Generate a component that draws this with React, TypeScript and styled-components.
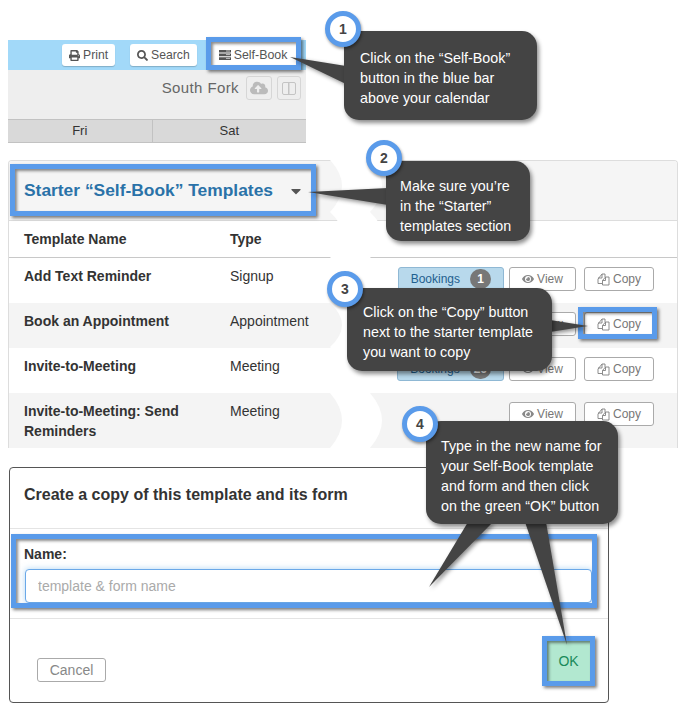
import React from 'react';
import styled, { createGlobalStyle } from 'styled-components';
import { FaPrint, FaSearch, FaEye, FaCloudUploadAlt, FaCaretDown } from 'react-icons/fa';

const GlobalStyle = createGlobalStyle`
    html, body {
        margin: 0;
        padding: 0;
        background: #ffffff;
    }
    body {
        font-family: 'Liberation Sans', Arial, sans-serif;
        font-size: 14px;
        color: #333333;
    }
`;

const rows = [
    { name: 'Add Text Reminder', type: 'Signup', bookings: 1 },
    { name: 'Book an Appointment', type: 'Appointment' },
    { name: 'Invite-to-Meeting', type: 'Meeting', bookings: 26 },
    { name: 'Invite-to-Meeting: Send Reminders', type: 'Meeting', tall: true },
];

const highlights = [
    { x: 206, y: 37, w: 95, h: 33 },
    { x: 10, y: 164, w: 306, h: 52 },
    { x: 578, y: 307, w: 79, h: 32 },
    { x: 11, y: 534, w: 586, h: 74 },
    { x: 542, y: 636, w: 53, h: 50 },
];

const callouts = [
    { n: 1, x: 344, y: 31, w: 193, h: 89, px: 16, py: 17, cx: 343, cy: 29, lines: ['Click on the “Self-Book”', 'button in the blue bar', 'above your calendar'] },
    { n: 2, x: 386, y: 161, w: 144, h: 80, px: 14, py: 15, cx: 384, cy: 158, lines: ['Make sure you’re', 'in the “Starter”', 'templates section'] },
    { n: 3, x: 347, y: 288, w: 205, h: 83, px: 16, py: 14, cx: 345, cy: 289, lines: ['Click on the “Copy” button', 'next to the starter template', 'you want to copy'] },
    { n: 4, x: 426, y: 421, w: 192, h: 103, px: 15, py: 15, cx: 420, cy: 424, lines: ['Type in the new name for', 'your Self-Book template', 'and form and then click', 'on the green “OK” button'] },
];

const tails = [
    '290,57 346,66 346,84',
    '308,192 388,188 388,205',
    '588,326 550,320 550,332',
    '429,587 468,522 493,522',
    '567,645 525,522 546,522',
];

// white torn strip through the panel, cusps sit on the row boundaries
const tearEdge = [160, 212, 257, 303, 347, 393, 448];

const tearPath = () => {
    const left = tearEdge.slice(1).map((y, i) => `Q354 ${(y + tearEdge[i]) / 2} 330 ${y}`);
    const right = tearEdge
        .slice(0, -1)
        .reverse()
        .map((y, i) => `Q394 ${(y + tearEdge[tearEdge.length - 1 - i]) / 2} 370 ${y}`);
    return `M330 ${tearEdge[0]} ${left.join(' ')} L370 448 ${right.join(' ')} Z`;
};

const CopyIcon = () => (
    <svg width="13" height="13" viewBox="0 0 13 13" fill="none" stroke="#808080" strokeWidth="0.9">
        <path d="M5 10.5H1V6l4-5h3v3" />
        <path d="M5 1v4H1" />
        <path d="M5.5 7.5 8.5 4H12v8H5.5z" />
        <path d="M8.5 4v3.5h-3" />
    </svg>
);

const App = () => {
    return (
        <Page>
            <GlobalStyle />
            <Calendar>
                <BlueBar>
                    <BarButton>
                        <FaPrint size={11} /> Print
                    </BarButton>
                    <BarButton>
                        <FaSearch size={11} /> Search
                    </BarButton>
                    <SelfBookButton>
                        <SelfBookIcon viewBox="0 0 12 10">
                            <path d="M0 0h12v2.6H0zM0 3.6h12v2.6H0zM0 7.2h12V10H0z" fill="#555" />
                            <path d="M7 1h4M7 4.6h4M7 8.4h4" stroke="#ddd" strokeWidth="0.8" />
                        </SelfBookIcon>
                        Self-Book
                    </SelfBookButton>
                </BlueBar>
                <LocationBar>
                    <LocationName>South Fork</LocationName>
                    <IconBox $width={26}>
                        <FaCloudUploadAlt size={18} />
                    </IconBox>
                    <IconBox $width={24}>
                        <SplitIcon />
                    </IconBox>
                </LocationBar>
                <DaysRow>
                    <DayCell $width={144}>Fri</DayCell>
                    <DayCell $width={154}>Sat</DayCell>
                </DaysRow>
            </Calendar>

            <Panel>
                <PanelHeader>
                    <PanelTitle>Starter “Self-Book” Templates</PanelTitle>
                    <FaCaretDown size={16} color="#555" />
                </PanelHeader>
                <TableHead>
                    <span>Template Name</span>
                    <span>Type</span>
                </TableHead>
                {rows.map((row, i) => (
                    <TableRow key={row.name} $shaded={i % 2 === 1} $tall={row.tall}>
                        <RowName>{row.name}</RowName>
                        <span>{row.type}</span>
                        <RowActions>
                            {row.bookings && (
                                <BookingsButton>
                                    Bookings <Badge>{row.bookings}</Badge>
                                </BookingsButton>
                            )}
                            <RowButton $width={67}>
                                <FaEye size={12} color="#888" /> View
                            </RowButton>
                            <RowButton $width={70}>
                                <CopyIcon /> Copy
                            </RowButton>
                        </RowActions>
                    </TableRow>
                ))}
            </Panel>

            <Modal>
                <ModalHeader>Create a copy of this template and its form</ModalHeader>
                <ModalBody>
                    <NameLabel>Name:</NameLabel>
                    <NameInput placeholder="template & form name" readOnly />
                </ModalBody>
                <ModalFooter>
                    <CancelButton>Cancel</CancelButton>
                    <OkButton>OK</OkButton>
                </ModalFooter>
            </Modal>

            <Overlay viewBox="0 0 686 718">
                <path d={tearPath()} fill="#ffffff" />
            </Overlay>

            {highlights.map((h) => (
                <Highlight key={`${h.x}-${h.y}`} $x={h.x} $y={h.y} $w={h.w} $h={h.h} />
            ))}

            <TailSvg viewBox="0 0 686 718">
                {tails.map((points) => (
                    <polygon key={points} points={points} fill="#444444" />
                ))}
            </TailSvg>

            {callouts.map((c) => (
                <React.Fragment key={c.n}>
                    <Callout $x={c.x} $y={c.y} $w={c.w} $h={c.h} $px={c.px} $py={c.py}>
                        {c.lines.map((line) => (
                            <div key={line}>{line}</div>
                        ))}
                    </Callout>
                    <StepCircle $cx={c.cx} $cy={c.cy}>
                        {c.n}
                    </StepCircle>
                </React.Fragment>
            ))}
        </Page>
    );
};

export default App;

const Page = styled.div`
    position: relative;
    width: 686px;
    height: 718px;
    overflow: hidden;
    padding: 40px 0 0 8px;
    box-sizing: border-box;
`;

const Calendar = styled.div`
    width: 298px;
`;

const BlueBar = styled.div`
    height: 30px;
    background: #a2d9f9;
    display: flex;
    align-items: flex-start;
    padding: 4px 0 0 54px;
    box-sizing: border-box;
    gap: 15px;
`;

const BarButton = styled.div`
    height: 22px;
    padding: 0 7px;
    display: flex;
    align-items: center;
    gap: 3px;
    background: #ffffff;
    border-radius: 3px;
    box-shadow: 0 1px 1px rgba(0, 0, 0, 0.2);
    font-size: 12.2px;
    color: #555555;
`;

const SelfBookButton = styled(BarButton)`
    width: 90px;
    height: 26px;
    box-sizing: border-box;
    margin: -2px 0 0 -3px;
    padding: 0 0 0 10px;
    box-shadow: none;
    border-radius: 0;
    font-size: 12.4px;
`;

const SelfBookIcon = styled.svg`
    width: 12px;
    height: 10px;
`;

const LocationBar = styled.div`
    height: 49px;
    background: #eeeeee;
    display: flex;
    justify-content: flex-end;
    align-items: flex-start;
    padding: 6px 5px 0 0;
    box-sizing: border-box;
    gap: 5px;
`;

const LocationName = styled.div`
    font-size: 15px;
    letter-spacing: 0.4px;
    line-height: 24px;
    color: #666666;
    margin-right: 2px;
`;

const IconBox = styled.div<{ $width: number }>`
    width: ${(p) => p.$width}px;
    height: 24px;
    box-sizing: border-box;
    border: 1px solid #d6d6d6;
    border-radius: 3px;
    color: #bbbbbb;
    display: flex;
    align-items: center;
    justify-content: center;
`;

const SplitIcon = styled.div`
    width: 14px;
    height: 13px;
    border: 1.5px solid #c4c4c4;
    border-radius: 2px;
    box-sizing: border-box;
    background: linear-gradient(#c4c4c4, #c4c4c4) center / 1.5px 100% no-repeat;
`;

const DaysRow = styled.div`
    display: flex;
    height: 24px;
    background: #d9d9d9;
    border-top: 1px solid #c2c2c2;
    border-bottom: 1px solid #c2c2c2;
    box-sizing: border-box;
`;

const DayCell = styled.div<{ $width: number }>`
    width: ${(p) => p.$width}px;
    text-align: center;
    font-size: 13px;
    line-height: 22px;
    color: #333333;
    & + & {
        border-left: 1px solid #c2c2c2;
    }
`;

const Panel = styled.div`
    width: 670px;
    height: 288px;
    margin-top: 17px;
    box-sizing: border-box;
    border: 1px solid #dddddd;
    border-bottom: none;
    border-radius: 4px 4px 0 0;
    overflow: hidden;
`;

const PanelHeader = styled.div`
    height: 59px;
    background: #f5f5f5;
    border-bottom: 1px solid #dddddd;
    display: flex;
    align-items: center;
    padding: 0 0 0 15px;
    gap: 15px;
`;

const PanelTitle = styled.div`
    font-size: 17.4px;
    font-weight: bold;
    color: #2a72a8;
`;

const TableHead = styled.div`
    height: 37px;
    display: grid;
    grid-template-columns: 206px 1fr;
    align-items: center;
    padding-left: 15px;
    font-weight: bold;
    box-sizing: border-box;
    border-bottom: 1px solid #c8c8c8;
`;

const TableRow = styled.div<{ $shaded?: boolean; $tall?: boolean }>`
    height: ${(p) => (p.$tall ? 55 : 45)}px;
    display: grid;
    grid-template-columns: 206px 1fr auto;
    padding: 8px 23px 0 15px;
    box-sizing: border-box;
    line-height: 20px;
    background: ${(p) => (p.$shaded ? '#f4f4f4' : '#ffffff')};
`;

const RowName = styled.div`
    font-weight: bold;
    width: 190px;
`;

const RowActions = styled.div`
    display: flex;
    align-items: flex-start;
    gap: 8px;
    margin-top: 1px;
`;

const BookingsButton = styled.div`
    height: 24px;
    padding: 0 12px;
    box-sizing: border-box;
    display: flex;
    align-items: center;
    gap: 10px;
    margin-right: -3px;
    background: #b8d9ec;
    border: 1px solid #8fb8d4;
    border-radius: 3px;
    font-size: 12px;
    color: #1f5f8f;
`;

const Badge = styled.span`
    min-width: 21px;
    height: 20px;
    padding: 0 4px;
    box-sizing: border-box;
    border-radius: 10px;
    background: #777777;
    color: #ffffff;
    font-size: 12px;
    font-weight: bold;
    line-height: 20px;
    text-align: center;
`;

const RowButton = styled.div<{ $width: number }>`
    width: ${(p) => p.$width}px;
    height: 24px;
    box-sizing: border-box;
    display: flex;
    align-items: center;
    justify-content: center;
    gap: 3px;
    border: 1px solid #aaaaaa;
    border-radius: 3px;
    background: #ffffff;
    font-size: 12px;
    color: #777777;
`;

const Modal = styled.div`
    width: 600px;
    height: 236px;
    margin: 19px 0 0 1px;
    box-sizing: border-box;
    border: 1px solid #555555;
    border-radius: 4px;
    display: flex;
    flex-direction: column;
`;

const ModalHeader = styled.div`
    height: 61px;
    box-sizing: border-box;
    border-bottom: 1px solid #e4e4e4;
    font-size: 16px;
    font-weight: bold;
    color: #333333;
    padding: 17px 0 0 14px;
    line-height: 20px;
`;

const ModalBody = styled.div`
    height: 90px;
    box-sizing: border-box;
    border-bottom: 1px solid #e4e4e4;
    padding: 16px 16px 0 15px;
`;

const NameLabel = styled.div`
    font-weight: bold;
    line-height: 18px;
    margin: 0 0 6px -1px;
`;

const NameInput = styled.input`
    display: block;
    width: 100%;
    height: 34px;
    box-sizing: border-box;
    padding: 0 12px;
    border: 1px solid #6aa8e8;
    border-radius: 4px;
    box-shadow: 0 0 6px rgba(102, 175, 233, 0.5);
    font-family: inherit;
    font-size: 14px;
    outline: none;
    &::placeholder {
        color: #aaaaaa;
    }
`;

const ModalFooter = styled.div`
    flex: 1;
    display: flex;
    justify-content: space-between;
    align-items: flex-start;
    padding: 22px 18px 0 27px;
`;

const CancelButton = styled.div`
    width: 69px;
    height: 24px;
    margin-top: 17px;
    box-sizing: border-box;
    border: 1px solid #aaaaaa;
    border-radius: 3px;
    text-align: center;
    line-height: 22px;
    font-size: 14px;
    color: #888888;
`;

const OkButton = styled.div`
    width: 43px;
    height: 40px;
    background: #b2e8d0;
    color: #1a8a5a;
    font-size: 14px;
    line-height: 40px;
    text-align: center;
`;

const Overlay = styled.svg`
    position: absolute;
    left: 0;
    top: 0;
    width: 686px;
    height: 718px;
    pointer-events: none;
`;

const TailSvg = styled(Overlay)`
    filter: drop-shadow(2px 2px 2px rgba(0, 0, 0, 0.45));
`;

const Highlight = styled.div<{ $x: number; $y: number; $w: number; $h: number }>`
    position: absolute;
    left: ${(p) => p.$x}px;
    top: ${(p) => p.$y}px;
    width: ${(p) => p.$w}px;
    height: ${(p) => p.$h}px;
    box-sizing: border-box;
    border: 5px solid #5a9bea;
    box-shadow: 2px 2px 3px rgba(0, 0, 0, 0.5), inset 2px 2px 3px rgba(0, 0, 0, 0.45);
`;

const Callout = styled.div<{ $x: number; $y: number; $w: number; $h: number; $px: number; $py: number }>`
    position: absolute;
    left: ${(p) => p.$x}px;
    top: ${(p) => p.$y}px;
    width: ${(p) => p.$w}px;
    height: ${(p) => p.$h}px;
    padding: ${(p) => p.$py}px 0 0 ${(p) => p.$px}px;
    box-sizing: border-box;
    background: #444444;
    border-radius: 15px;
    box-shadow: 2px 3px 4px rgba(0, 0, 0, 0.45);
    color: #ffffff;
    font-size: 14.3px;
    line-height: 20px;
    white-space: nowrap;
`;

const StepCircle = styled.div<{ $cx: number; $cy: number }>`
    position: absolute;
    left: ${(p) => p.$cx - 18}px;
    top: ${(p) => p.$cy - 18}px;
    width: 36px;
    height: 36px;
    box-sizing: border-box;
    border: 5px solid #5a9bea;
    border-radius: 50%;
    background: #ffffff;
    box-shadow: 1px 2px 3px rgba(0, 0, 0, 0.4);
    color: #444444;
    font-size: 14px;
    font-weight: bold;
    line-height: 26px;
    text-align: center;
`;
